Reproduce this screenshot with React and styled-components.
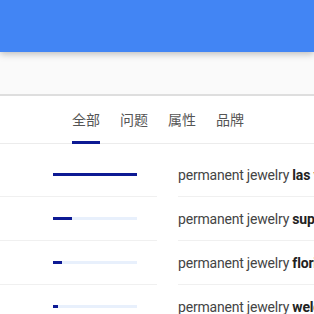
import React from 'react'
import styled, { createGlobalStyle } from 'styled-components'

const GlobalStyle = createGlobalStyle`
    body {
        margin: 0;
        background: #ffffff;
        font-family: Roboto, "Noto Sans CJK SC", sans-serif;
        overflow: hidden;
    }
`

const Header = styled.div`
    height: 52px;
    background: #4285f4;
    box-shadow: 0 2px 7px rgba(0, 0, 0, 0.25);
    position: relative;
`

const SubBar = styled.div`
    height: 42px;
    background: #fafafa;
    border-bottom: 2px solid #dedede;
`

const TabRow = styled.div`
    display: flex;
    gap: 20px;
    padding-left: 72px;
    height: 47px;
    border-bottom: 1px solid #ececec;
`

const Tab = styled.div`
    position: relative;
    width: 28px;
    display: flex;
    align-items: center;
    padding-top: 1px;
    padding-bottom: 2px;
    font-family: "Noto Sans CJK SC", sans-serif;
    font-size: 14px;
    color: #555555;
    white-space: nowrap;

    &::after {
        content: '';
        display: ${p => (p.$active ? 'block' : 'none')};
        position: absolute;
        left: 0;
        right: 0;
        bottom: -1px;
        height: 3px;
        background: #0d1a94;
    }
`

const List = styled.div`
    padding-top: 9px;
`

const Row = styled.div`
    display: grid;
    grid-template-columns: 157px 1fr;
    column-gap: 21px;
    height: 44px;
`

const BarCell = styled.div`
    display: flex;
    align-items: center;
    padding-left: 53px;
    border-bottom: 1px solid #f0f0f0;
`

const Track = styled.div`
    width: 84px;
    height: 3px;
    background: #e8f0fc;
`

const Fill = styled.div`
    height: 100%;
    background: #0d1a94;
`

const TextCell = styled.div`
    display: flex;
    align-items: center;
    overflow: hidden;
    white-space: nowrap;
    font-size: 14px;
    letter-spacing: -0.2px;
    color: #444444;
    border-bottom: 1px solid #f0f0f0;

    b {
        color: #222222;
        font-weight: 700;
    }
`

const tabs = ['全部', '问题', '属性', '品牌']

const rows = [
    { suffix: 'las vegas', value: 100 },
    { suffix: 'supplies', value: 23 },
    { suffix: 'florida', value: 11 },
    { suffix: 'welder', value: 6 },
]

export default function App() {
    return (
        <>
            <GlobalStyle />
            <Header />
            <SubBar />
            <TabRow>
                {tabs.map((t, i) => (
                    <Tab key={t} $active={i === 0}>{t}</Tab>
                ))}
            </TabRow>
            <List>
                {rows.map(r => (
                    <Row key={r.suffix}>
                        <BarCell>
                            <Track>
                                <Fill style={{ width: `${r.value}%` }} />
                            </Track>
                        </BarCell>
                        <TextCell>
                            permanent jewelry&nbsp;<b>{r.suffix}</b>
                        </TextCell>
                    </Row>
                ))}
            </List>
        </>
    )
}
